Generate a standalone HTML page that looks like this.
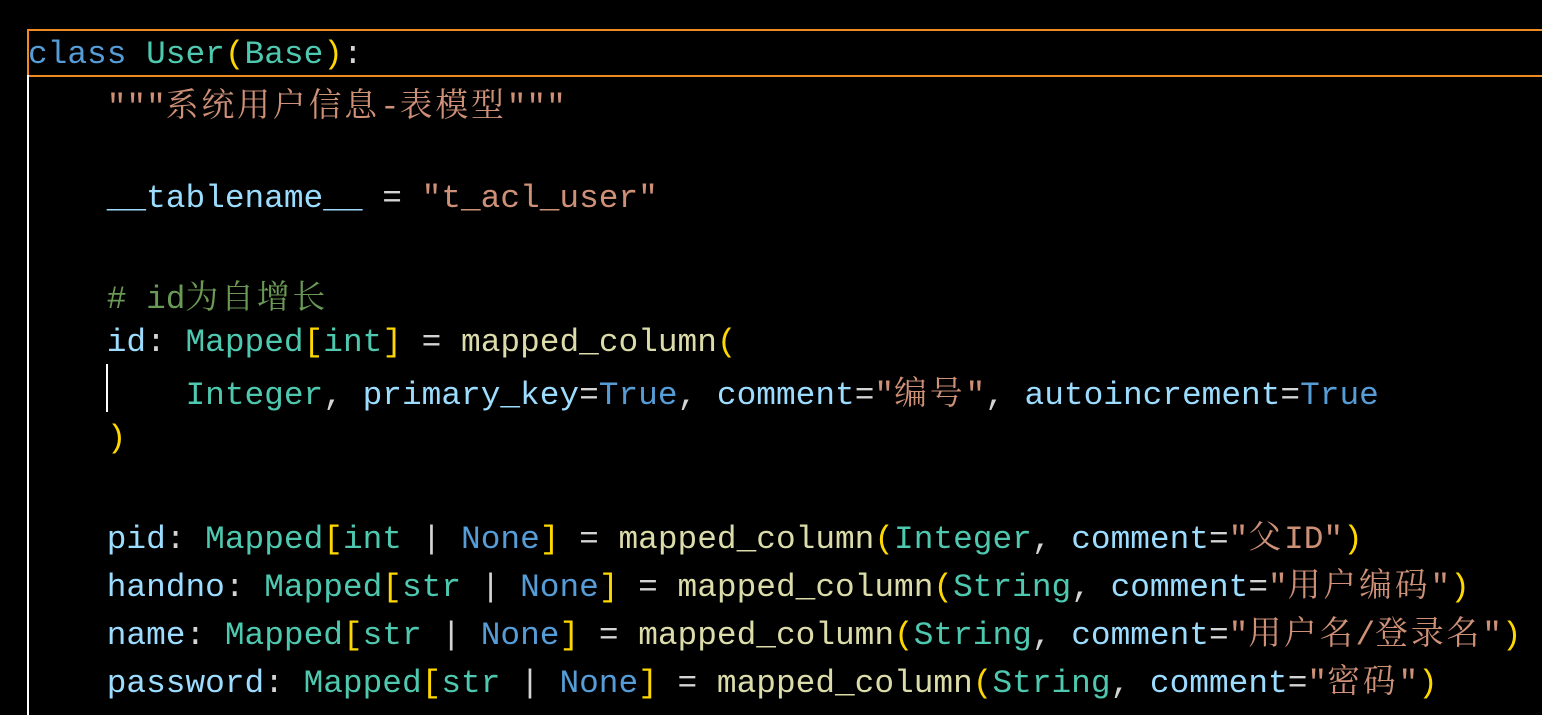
<!DOCTYPE html>
<html><head><meta charset="utf-8"><style>
body{margin:0;background:#000;width:1542px;height:707px;overflow:hidden;position:relative}
.l{position:absolute;left:28px;white-space:pre;font-family:"Liberation Mono",monospace;font-size:32.8px;line-height:48px;height:48px;color:#d4d4d4;transform:translateY(3px)}
.z{font-family:"Noto Serif CJK SC","Noto Sans CJK SC",serif;letter-spacing:2.9px}
.k{color:#569cd6}.c{color:#4ec9b0}.s{color:#ce9178}.v{color:#9cdcfe}.f{color:#dcdcaa}.m{color:#6a9955}.y{color:#ffd700}
#box{position:absolute;left:27px;top:29px;width:1520px;height:44px;border:2px solid #f08a24;border-right:none}
#lb{position:absolute;left:27px;top:75px;width:2px;height:640px;background:#fff}
#g{position:absolute;left:106px;top:364px;width:2px;height:48px;background:#fff}
</style></head><body>
<div id="box"></div><div id="lb"></div><div id="g"></div>
<div class="l" style="top:28px"><span class="k">class</span> <span class="c">User</span><span class="y">(</span><span class="c">Base</span><span class="y">)</span>:</div>
<div class="l" style="top:76px">    <span class="s">"""<span class="z">系统用户信息</span>-<span class="z">表模型</span>"""</span></div>
<div class="l" style="top:172px">    <span class="v">__tablename__</span> = <span class="s">"t_acl_user"</span></div>
<div class="l" style="top:268px">    <span class="m"># id<span class="z">为自增长</span></span></div>
<div class="l" style="top:316px">    <span class="v">id</span>: <span class="c">Mapped</span><span class="y">[</span><span class="c">int</span><span class="y">]</span> = <span class="f">mapped_column</span><span class="y">(</span></div>
<div class="l" style="top:364px">        <span class="c">Integer</span>, <span class="v">primary_key</span>=<span class="k">True</span>, <span class="v">comment</span>=<span class="s">"<span class="z">编号</span>"</span>, <span class="v">autoincrement</span>=<span class="k">True</span></div>
<div class="l" style="top:412px">    <span class="y">)</span></div>
<div class="l" style="top:508px">    <span class="v">pid</span>: <span class="c">Mapped</span><span class="y">[</span><span class="c">int</span> | <span class="k">None</span><span class="y">]</span> = <span class="f">mapped_column</span><span class="y">(</span><span class="c">Integer</span>, <span class="v">comment</span>=<span class="s">"<span class="z">父</span>ID"</span><span class="y">)</span></div>
<div class="l" style="top:556px">    <span class="v">handno</span>: <span class="c">Mapped</span><span class="y">[</span><span class="c">str</span> | <span class="k">None</span><span class="y">]</span> = <span class="f">mapped_column</span><span class="y">(</span><span class="c">String</span>, <span class="v">comment</span>=<span class="s">"<span class="z">用户编码</span>"</span><span class="y">)</span></div>
<div class="l" style="top:604px">    <span class="v">name</span>: <span class="c">Mapped</span><span class="y">[</span><span class="c">str</span> | <span class="k">None</span><span class="y">]</span> = <span class="f">mapped_column</span><span class="y">(</span><span class="c">String</span>, <span class="v">comment</span>=<span class="s">"<span class="z">用户名</span>/<span class="z">登录名</span>"</span><span class="y">)</span></div>
<div class="l" style="top:652px">    <span class="v">password</span>: <span class="c">Mapped</span><span class="y">[</span><span class="c">str</span> | <span class="k">None</span><span class="y">]</span> = <span class="f">mapped_column</span><span class="y">(</span><span class="c">String</span>, <span class="v">comment</span>=<span class="s">"<span class="z">密码</span>"</span><span class="y">)</span></div>
</body></html>
